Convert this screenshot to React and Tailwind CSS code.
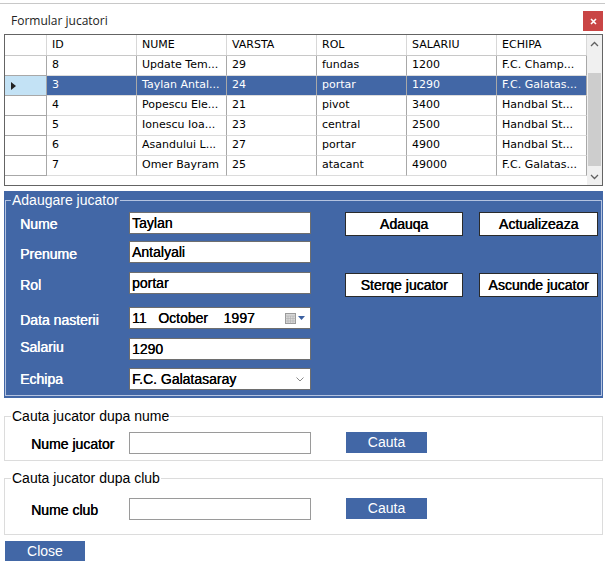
import React from "react";

const cols = ["ID", "NUME", "VARSTA", "ROL", "SALARIU", "ECHIPA"];
const rows = [
  ["8", "Update Tem...", "29", "fundas", "1200", "F.C. Champ..."],
  ["3", "Taylan Antal...", "24", "portar", "1290", "F.C. Galatas..."],
  ["4", "Popescu Ele...", "21", "pivot", "3400", "Handbal St..."],
  ["5", "Ionescu Ioa...", "23", "central", "2500", "Handbal St..."],
  ["6", "Asandului L...", "27", "portar", "4900", "Handbal St..."],
  ["7", "Omer Bayram", "25", "atacant", "49000", "F.C. Galatas..."],
];

function Grid() {
  return (
    <div className="ml-[4px] w-[599px] h-[152px] border border-[#646464] flex bg-white font-['DejaVu_Sans',sans-serif] text-[11px] text-black">
      <div className="w-[582px] flex flex-col">
        <div className="flex h-[21px] border-b border-[#c8c8c8]">
          <div className="w-[42px] border-r border-[#d8d8d8]" />
          {cols.map((c) => (
            <div key={c} className="w-[90px] border-r border-[#d8d8d8] pl-[5px] flex items-center">
              {c}
            </div>
          ))}
        </div>
        {rows.map((r, i) => {
          const sel = i === 1;
          return (
            <div key={i} className="flex h-[20px]">
              <div
                className={
                  "w-[42px] border-r border-b border-[#a8a8a8] flex items-center pl-[6px] " +
                  (sel ? "bg-[#c3e2f5]" : "bg-white")
                }
              >
                {sel && (
                  <svg width="5" height="8" viewBox="0 0 5 8">
                    <path d="M0 0 L5 4 L0 8 Z" fill="#222" />
                  </svg>
                )}
              </div>
              {r.map((v, j) => (
                <div
                  key={j}
                  className={
                    "w-[90px] border-r border-b border-r-[#a8a8a8] border-b-[#dcdcdc] pl-[5px] flex items-center whitespace-nowrap overflow-hidden " +
                    (sel ? "bg-[#4267a6] text-white" : "bg-white")
                  }
                >
                  {v}
                </div>
              ))}
            </div>
          );
        })}
        <div className="flex-1 bg-white" />
      </div>
      <div className="w-[15px] bg-[#f0f0f0] flex flex-col">
        <div className="h-[17px] flex items-center justify-center">
          <svg width="9" height="6" viewBox="0 0 9 6">
            <path d="M1 5 L4.5 1.5 L8 5" stroke="#606060" strokeWidth="1.3" fill="none" />
          </svg>
        </div>
        <div className="h-[21px]" />
        <div className="h-[93px] mx-[1px] bg-[#cdcdcd]" />
        <div className="flex-1" />
        <div className="h-[17px] flex items-center justify-center">
          <svg width="9" height="6" viewBox="0 0 9 6">
            <path d="M1 1 L4.5 4.5 L8 1" stroke="#606060" strokeWidth="1.3" fill="none" />
          </svg>
        </div>
      </div>
    </div>
  );
}

function Field({ label, children, mt, lpt }) {
  return (
    <div className={"flex items-center h-[22px] " + mt}>
      <div className={"w-[109px] text-white text-[14px] [text-shadow:0.4px_0_0_currentColor] " + lpt}>{label}</div>
      {children}
    </div>
  );
}

const inputCls =
  "w-[182px] h-[22px] bg-white border border-[#6e6e6e] pl-[2px] flex items-center text-[14px] text-black [text-shadow:0.25px_0_0_currentColor]";

function WhiteBtn({ children }) {
  return (
    <div className="h-[24px] bg-white border border-[#2a2a2a] flex items-center justify-center text-[14px] text-black [text-shadow:0.5px_0_0_currentColor]">
      {children}
    </div>
  );
}

export default function App() {
  return (
    <div className="w-[605px] h-[568px] bg-white overflow-hidden font-['Liberation_Sans',Arial,sans-serif]">
      <div className="h-[3px]" />
      <div className="border-t border-[#c8c8c8]" />
      <div className="h-[30px] flex justify-between pl-[11px] pr-[2px]">
        <div className="font-['Open_Sans',sans-serif] text-[12px] text-[#222] mt-[8px]">Formular jucatori</div>
        <div className="mt-[7px] w-[20px] h-[20px] bg-[#c94545] flex items-center justify-center">
          <svg width="7" height="7" viewBox="0 0 7 7">
            <path d="M1 1 L6 6 M6 1 L1 6" stroke="white" strokeWidth="1.6" />
          </svg>
        </div>
      </div>

      <Grid />

      <div className="mt-[5px] ml-[4px] w-[599px] h-[207px] bg-[#4267a6] pt-[1px] px-[1px] pb-[2px]">
        <fieldset className="h-full border border-[#b4c3e0]">
          <legend className="ml-[5px] px-[1px] text-white text-[14px] leading-[16px]">Adaugare jucator</legend>
          <div className="flex">
            <div className="pl-[14px] flex flex-col">
              <Field label="Nume" mt="mt-[4px]" lpt="pt-[3px]">
                <div className={inputCls}>Taylan</div>
              </Field>
              <Field label="Prenume" mt="mt-[7px]" lpt="pt-[5px]">
                <div className={inputCls}>Antalyali</div>
              </Field>
              <Field label="Rol" mt="mt-[9px]" lpt="pt-[4px]">
                <div className={inputCls}>portar</div>
              </Field>
              <Field label="Data nasterii" mt="mt-[13px]" lpt="pt-[4px]">
                <div className={inputCls + " justify-between pr-[5px]"}>
                  <span className="whitespace-pre">11   October    1997</span>
                  <span className="flex items-center gap-[2px]">
                    <svg width="11" height="11" viewBox="0 0 11 11">
                      <rect x="0.5" y="0.5" width="10" height="10" fill="#d8d8d8" stroke="#9a9a9a" />
                      <path d="M0.5 3 H10.5 M3 3 V10.5 M5.5 3 V10.5 M8 3 V10.5 M0.5 5.5 H10.5 M0.5 8 H10.5" stroke="#b0b0b0" strokeWidth="0.6" />
                    </svg>
                    <svg width="7" height="4" viewBox="0 0 7 4">
                      <path d="M0 0 H7 L3.5 4 Z" fill="#3a5fa0" />
                    </svg>
                  </span>
                </div>
              </Field>
              <Field label="Salariu" mt="mt-[9px]" lpt="pb-[4px]">
                <div className={inputCls}>1290</div>
              </Field>
              <Field label="Echipa" mt="mt-[8px]" lpt="">
                <div className={inputCls + " justify-between pr-[6px]"}>
                  <span>F.C. Galatasaray</span>
                  <svg width="8" height="5" viewBox="0 0 8 5">
                    <path d="M0.5 0.5 L4 4 L7.5 0.5" stroke="#888" strokeWidth="1" fill="none" />
                  </svg>
                </div>
              </Field>
            </div>
            <div className="ml-[34px] mt-[4px] grid grid-cols-[118px_119px] gap-x-[16px] gap-y-[37px] h-fit">
              <WhiteBtn>Adauqa</WhiteBtn>
              <WhiteBtn>Actualizeaza</WhiteBtn>
              <WhiteBtn>Sterqe jucator</WhiteBtn>
              <WhiteBtn>Ascunde jucator</WhiteBtn>
            </div>
          </div>
        </fieldset>
      </div>

      <fieldset className="mt-[10px] ml-[4px] w-[599px] h-[53px] border border-[#dcdcdc]">
        <legend className="ml-[6px] px-[1px] text-[14px] leading-[16px] text-black">Cauta jucator dupa nume</legend>
        <div className="flex items-center mt-[6px]">
          <div className="pl-[26px] w-[124px] text-[14px] text-black pt-[4px] [text-shadow:0.4px_0_0_currentColor]">Nume jucator</div>
          <div className="w-[182px] h-[22px] border border-[#9a9a9a] bg-white" />
          <div className="ml-[35px] w-[81px] h-[21px] bg-[#4267a6] text-white text-[14px] flex items-center justify-center">Cauta</div>
        </div>
      </fieldset>

      <fieldset className="mt-[9px] ml-[4px] w-[599px] h-[65px] border border-[#dcdcdc]">
        <legend className="ml-[6px] px-[1px] text-[14px] leading-[16px] text-black">Cauta jucator dupa club</legend>
        <div className="flex items-center mt-[10px]">
          <div className="pl-[26px] w-[124px] text-[14px] text-black pt-[4px] [text-shadow:0.4px_0_0_currentColor]">Nume club</div>
          <div className="w-[182px] h-[22px] border border-[#9a9a9a] bg-white" />
          <div className="ml-[35px] w-[81px] h-[21px] bg-[#4267a6] text-white text-[14px] flex items-center justify-center">Cauta</div>
        </div>
      </fieldset>

      <div className="mt-[6px] ml-[5px] w-[80px] h-[20px] bg-[#4267a6] text-white text-[14px] flex items-center justify-center">Close</div>
    </div>
  );
}
